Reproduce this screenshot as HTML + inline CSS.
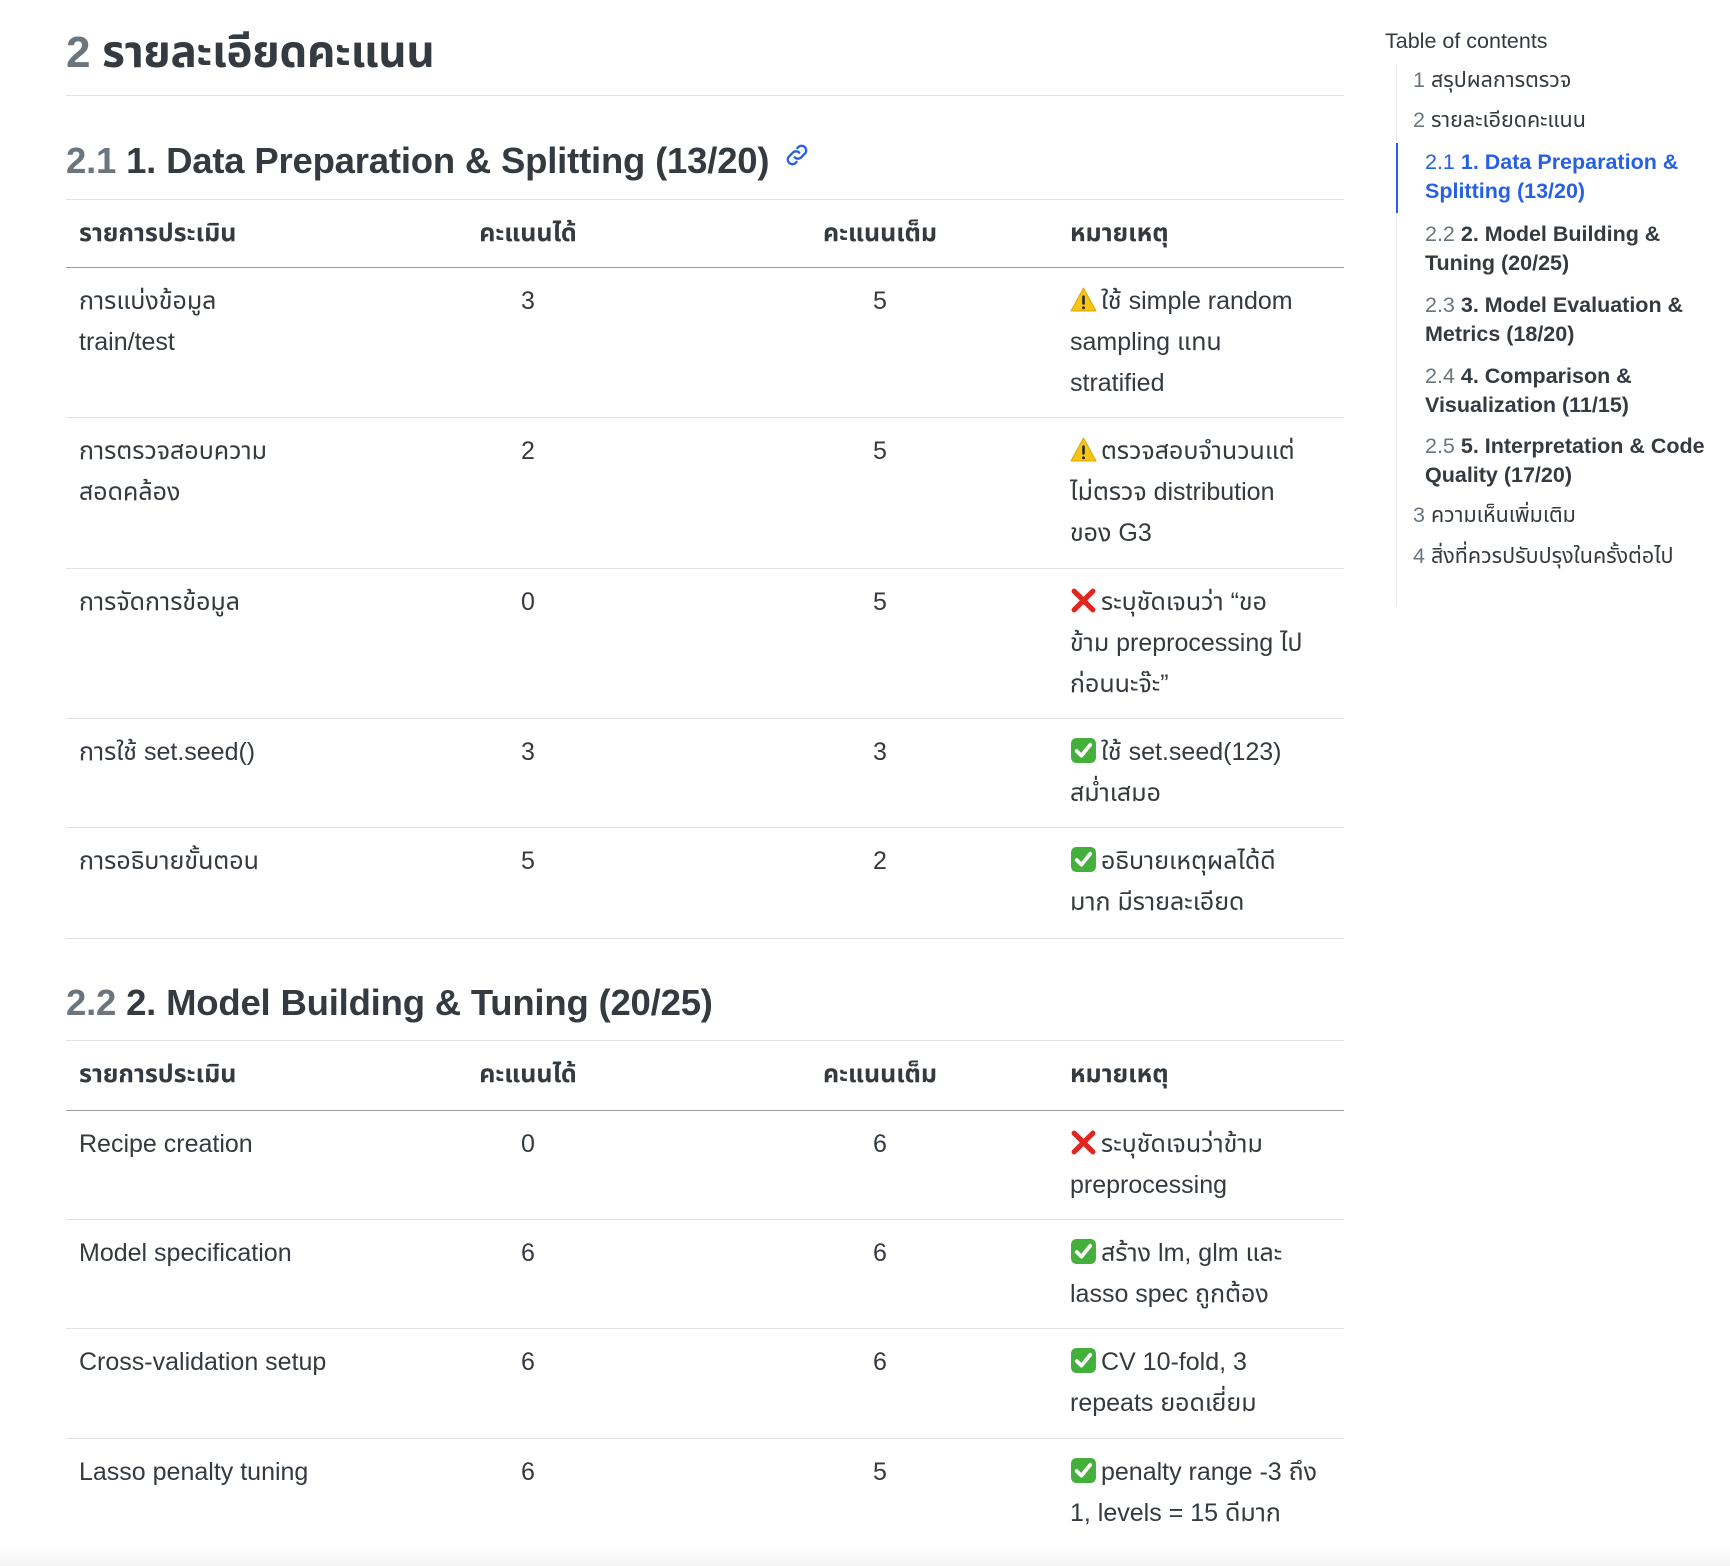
<!DOCTYPE html>
<html><head><meta charset="utf-8">
<style>
*{margin:0;padding:0;box-sizing:border-box}
body{width:1730px;height:1566px;background:#fff;color:#343a40;font-family:"Liberation Sans","Noto Sans Thai","Noto Sans CJK SC",sans-serif;position:relative;overflow:hidden}
.h1{position:absolute;left:66px;top:27px;font-size:44px;font-weight:bold;line-height:52px;letter-spacing:-0.3px}
.num{color:#6c757d}
.hr{position:absolute;left:66px;width:1278px;height:1px;background:#dee2e6}
.h2{position:absolute;left:66px;font-size:36.5px;font-weight:bold;line-height:46px;letter-spacing:-0.2px}
table{position:absolute;left:66px;width:1278px;border-collapse:collapse;font-size:25px;line-height:41px;table-layout:fixed}
td,th{vertical-align:top;padding:13px 13px 0 13px;text-align:left;font-weight:normal;white-space:nowrap}
th{font-weight:bold}
tr{border-bottom:1px solid #dee2e6}
tr.hd{border-top:1px solid #dee2e6;border-bottom:1.5px solid #9a9fa4}
.c{text-align:center}
.c3{text-align:center;padding-left:80px}
.ic{display:inline-block;width:27px;height:27px;vertical-align:-4px;margin-right:4px}
.toc{position:absolute;left:1385px;top:26px;font-size:21.5px;line-height:30px}
.toc .line{position:absolute;left:11px;top:38px;width:1px;height:542px;background:#e9ecef}
.toc .act{position:absolute;left:11px;top:117px;width:2px;height:70px;background:#2761e3}
.ti{position:absolute;white-space:nowrap;font-size:21.5px;line-height:29px}
.ti .n{color:#6c757d;font-weight:normal}
.ti b{font-weight:bold}
</style></head><body>

<div class="h1"><span class="num">2</span> รายละเอียดคะแนน</div>
<div class="hr" style="top:95px"></div>

<div class="h2" style="top:138px"><span class="num">2.1</span> 1. Data Preparation &amp; Splitting (13/20) <svg width="28" height="28" viewBox="0 0 24 24" style="vertical-align:4px;margin-left:4px"><g fill="none" stroke="#2761e3" stroke-width="2" stroke-linecap="round"><path d="M10 14a4 4 0 0 0 5.6 0l3.5-3.5a4 4 0 0 0-5.6-5.6l-1.2 1.2"/><path d="M14 10a4 4 0 0 0-5.6 0l-3.5 3.5a4 4 0 0 0 5.6 5.6l1.2-1.2"/></g></svg></div>

<svg width="0" height="0" style="position:absolute">
<defs>
<symbol id="warn" viewBox="0 0 26 26"><path d="M13 2 L25 24 H1 Z" fill="#f5c518" stroke="#e0a800" stroke-width="1" stroke-linejoin="round"/><rect x="11.8" y="9" width="2.4" height="9" rx="1" fill="#222"/><circle cx="13" cy="21" r="1.4" fill="#222"/></symbol>
<symbol id="x" viewBox="0 0 26 26"><path d="M4 4 L22 22 M22 4 L4 22" stroke="#e0261f" stroke-width="5" stroke-linecap="round"/></symbol>
<symbol id="ok" viewBox="0 0 26 26"><rect x="1" y="1" width="24" height="24" rx="5" fill="#44b03c"/><path d="M6.5 13.5 L11 18 L19.5 7.5" fill="none" stroke="#fff" stroke-width="3.6" stroke-linecap="round" stroke-linejoin="round"/></symbol>
</defs></svg>

<table style="top:199px">
<colgroup><col style="width:354px"><col style="width:216px"><col style="width:421px"><col style="width:287px"></colgroup>
<tr class="hd" style="height:68px"><th>รายการประเมิน</th><th class="c">คะแนนได้</th><th class="c3">คะแนนเต็ม</th><th>หมายเหตุ</th></tr>
<tr style="height:150px"><td>การแบ่งข้อมูล<br>train/test</td><td class="c">3</td><td class="c3">5</td><td><svg class="ic"><use href="#warn"/></svg>ใช้ simple random<br>sampling แทน<br>stratified</td></tr>
<tr style="height:151px"><td>การตรวจสอบความ<br>สอดคล้อง</td><td class="c">2</td><td class="c3">5</td><td><svg class="ic"><use href="#warn"/></svg>ตรวจสอบจำนวนแต่<br>ไม่ตรวจ distribution<br>ของ G3</td></tr>
<tr style="height:150px"><td>การจัดการข้อมูล</td><td class="c">0</td><td class="c3">5</td><td><svg class="ic"><use href="#x"/></svg>ระบุชัดเจนว่า “ขอ<br>ข้าม preprocessing ไป<br>ก่อนนะจ๊ะ”</td></tr>
<tr style="height:109px"><td>การใช้ set.seed()</td><td class="c">3</td><td class="c3">3</td><td><svg class="ic"><use href="#ok"/></svg>ใช้ set.seed(123)<br>สม่ำเสมอ</td></tr>
<tr style="height:111px"><td>การอธิบายขั้นตอน</td><td class="c">5</td><td class="c3">2</td><td><svg class="ic"><use href="#ok"/></svg>อธิบายเหตุผลได้ดี<br>มาก มีรายละเอียด</td></tr>
</table>

<div class="h2" style="top:980px"><span class="num">2.2</span> 2. Model Building &amp; Tuning (20/25)</div>

<table style="top:1040px">
<colgroup><col style="width:354px"><col style="width:216px"><col style="width:421px"><col style="width:287px"></colgroup>
<tr class="hd" style="height:70px"><th>รายการประเมิน</th><th class="c">คะแนนได้</th><th class="c3">คะแนนเต็ม</th><th>หมายเหตุ</th></tr>
<tr style="height:109px"><td>Recipe creation</td><td class="c">0</td><td class="c3">6</td><td><svg class="ic"><use href="#x"/></svg>ระบุชัดเจนว่าข้าม<br>preprocessing</td></tr>
<tr style="height:109px"><td>Model specification</td><td class="c">6</td><td class="c3">6</td><td><svg class="ic"><use href="#ok"/></svg>สร้าง lm, glm และ<br>lasso spec ถูกต้อง</td></tr>
<tr style="height:110px"><td>Cross-validation setup</td><td class="c">6</td><td class="c3">6</td><td><svg class="ic"><use href="#ok"/></svg>CV 10-fold, 3<br>repeats ยอดเยี่ยม</td></tr>
<tr style="height:111px"><td>Lasso penalty tuning</td><td class="c">6</td><td class="c3">5</td><td><svg class="ic"><use href="#ok"/></svg>penalty range -3 ถึง<br>1, levels = 15 ดีมาก</td></tr>
</table>

<div style="position:absolute;left:0;top:1548px;width:1730px;height:18px;background:linear-gradient(#fff,#f4f4f4)"></div>

<div class="toc">Table of contents
<div class="line"></div><div class="act"></div>
</div>
<div class="ti" style="left:1413px;top:66px"><span class="n">1</span> สรุปผลการตรวจ</div>
<div class="ti" style="left:1413px;top:106px"><span class="n">2</span> รายละเอียดคะแนน</div>
<div class="ti" style="left:1425px;top:148px;color:#2761e3"><span class="n" style="color:#2761e3">2.1</span> <b>1. Data Preparation &amp;<br>Splitting (13/20)</b></div>
<div class="ti" style="left:1425px;top:220px"><span class="n">2.2</span> <b>2. Model Building &amp;<br>Tuning (20/25)</b></div>
<div class="ti" style="left:1425px;top:291px"><span class="n">2.3</span> <b>3. Model Evaluation &amp;<br>Metrics (18/20)</b></div>
<div class="ti" style="left:1425px;top:362px"><span class="n">2.4</span> <b>4. Comparison &amp;<br>Visualization (11/15)</b></div>
<div class="ti" style="left:1425px;top:432px"><span class="n">2.5</span> <b>5. Interpretation &amp; Code<br>Quality (17/20)</b></div>
<div class="ti" style="left:1413px;top:501px"><span class="n">3</span> ความเห็นเพิ่มเติม</div>
<div class="ti" style="left:1413px;top:542px"><span class="n">4</span> สิ่งที่ควรปรับปรุงในครั้งต่อไป</div>

</body></html>
